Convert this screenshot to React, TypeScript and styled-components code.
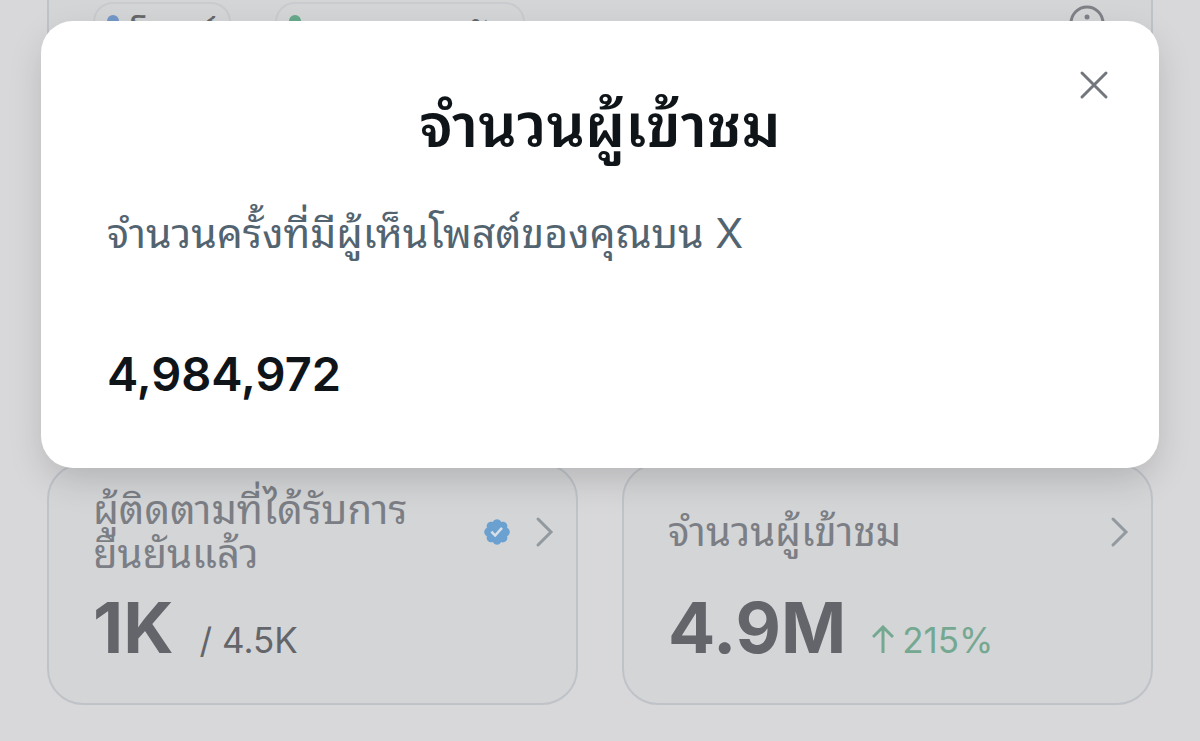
import React from "react";
import styled, { createGlobalStyle } from "styled-components";

const GlobalStyle = createGlobalStyle`
  * { box-sizing: border-box; }
  html, body { margin: 0; min-height: 100%; background: #d8d8da; }
  body { overflow: hidden; font-family: Inter, "Noto Sans Thai Looped", "Noto Sans Thai", sans-serif; }
  button { font: inherit; color: inherit; background: none; border: 0; padding: 0; }
  h1, h2, p { margin: 0; font-weight: 400; }
`;

const Page = styled.div`
  position: relative;
  padding: 0 47px 36px;
`;

const Panel = styled.section`
  display: flex;
  justify-content: space-between;
  align-items: flex-start;
  min-height: 419px;
  padding: 2px 46px 0 44px;
  background: #d4d5d7;
  border: solid #bfc3c8;
  border-width: 0 2px 2px;
  border-radius: 0 0 36px 36px;
`;

const Chips = styled.div`
  display: flex;
  gap: 44px;
`;

const Chip = styled.button`
  display: flex;
  align-items: center;
  gap: 12px;
  height: 70px;
  padding: 0 12px;
  border: 2px solid #c9cbce;
  border-radius: 20px;
  color: #66676a;
  font-size: 38px;
  line-height: 44px;
`;

const Dot = styled.span<{ $color: string }>`
  width: 12px;
  height: 12px;
  margin-bottom: 32px;
  border-radius: 50%;
  background: ${(p) => p.$color};
`;

const IconButton = styled.button`
  display: flex;
  color: #7e8186;
`;

const Cards = styled.div`
  display: grid;
  grid-template-columns: 1fr 1fr;
  gap: 44px;
  margin-top: 44px;
`;

const Card = styled.a`
  display: flex;
  flex-direction: column;
  gap: 16px;
  padding: 23px 22px 39px 44px;
  background: #d4d5d7;
  border: 2px solid #bfc3c8;
  border-radius: 36px;
  color: #63656a;
  text-decoration: none;
`;

const CardHead = styled.div`
  display: flex;
  align-items: center;
  justify-content: space-between;
  min-height: 88px;
`;

const CardTitle = styled.h2`
  max-width: 340px;
  color: #7b7e84;
  font-size: 40px;
  line-height: 44px;
`;

const CardIcons = styled.span`
  display: flex;
  align-items: center;
  gap: 22px;
  color: #92999f;
`;

const Figures = styled.div`
  display: flex;
  align-items: baseline;
  gap: 26px;
`;

const Value = styled.strong`
  font-size: 70px;
  line-height: 72px;
  font-weight: 700;
`;

const Note = styled.span<{ $positive?: boolean }>`
  display: flex;
  align-items: baseline;
  gap: 8px;
  color: ${(p) => (p.$positive ? "#75a890" : "#63656a")};
  font-size: 35px;
  line-height: 44px;
`;

const Dialog = styled.div`
  position: absolute;
  top: 21px;
  left: 41px;
  right: 41px;
  padding: 64px 66px;
  background: #fff;
  border-radius: 32px;
  box-shadow: 0 14px 36px -4px rgba(0, 0, 0, 0.17);
`;

const DialogTitle = styled.h1`
  color: #0f1419;
  font-size: 60px;
  line-height: 80px;
  font-weight: 600;
  text-align: center;
`;

const Description = styled.p`
  margin-top: 38px;
  color: #536471;
  font-size: 41px;
  line-height: 60px;
`;

const Total = styled.p`
  margin-top: 81px;
  color: #0f1419;
  font-size: 47px;
  line-height: 60px;
  font-weight: 600;
`;

const Close = styled.button`
  position: absolute;
  top: 48px;
  right: 49px;
  display: flex;
  color: #72767d;
`;

const Chevron = () => (
  <svg width="20" height="32" viewBox="0 0 20 32" fill="none" stroke="currentColor" strokeWidth="3" strokeLinecap="round" aria-hidden="true">
    <path d="M4 3l13 13L4 29" />
  </svg>
);

const ArrowUp = () => (
  <svg width="22" height="28" viewBox="0 0 22 28" fill="none" stroke="currentColor" strokeWidth="3" aria-hidden="true">
    <path d="M11 28V2M1 12L11 2l10 10" />
  </svg>
);

const Verified = () => (
  <svg width="30" height="30" viewBox="0 0 22 22" aria-label="ยืนยันแล้ว">
    <path
      fill="#6ba1d1"
      d="M20.396 11c-.018-.646-.215-1.275-.57-1.816-.354-.54-.852-.972-1.438-1.246.223-.607.27-1.264.14-1.897-.131-.634-.437-1.218-.882-1.687-.47-.445-1.053-.75-1.687-.882-.633-.13-1.29-.083-1.897.14-.273-.587-.704-1.086-1.245-1.44S11.647 1.62 11 1.604c-.646.017-1.273.213-1.813.568s-.969.854-1.24 1.44c-.608-.223-1.267-.272-1.902-.14-.635.13-1.22.436-1.69.882-.445.47-.749 1.055-.878 1.688-.13.633-.08 1.29.144 1.896-.587.274-1.087.705-1.443 1.245-.356.54-.555 1.17-.574 1.817.02.647.218 1.276.574 1.817.356.54.856.972 1.443 1.245-.224.606-.274 1.263-.144 1.896.13.634.433 1.218.877 1.688.47.443 1.054.747 1.687.878.633.132 1.29.084 1.897-.136.274.586.705 1.084 1.246 1.439.54.354 1.17.551 1.816.569.647-.016 1.276-.213 1.817-.567s.972-.854 1.245-1.44c.604.239 1.266.296 1.903.164.636-.132 1.22-.447 1.68-.907.46-.46.776-1.044.908-1.681s.075-1.299-.165-1.903c.586-.274 1.084-.705 1.439-1.246.354-.54.551-1.17.569-1.816z"
    />
    <path fill="#d8e0e8" d="M9.662 14.85l-3.429-3.428 1.293-1.302 2.072 2.072 4.4-4.794 1.347 1.246z" />
  </svg>
);

export default function App() {
  return (
    <>
      <GlobalStyle />
      <Page>
        <Panel>
          <Chips>
            <Chip><Dot $color="#7397c7" />โพสต์</Chip>
            <Chip><Dot $color="#66a98a" />การตอบกลับ</Chip>
          </Chips>
          <IconButton aria-label="ข้อมูล">
            <svg width="38" height="38" viewBox="0 0 38 38" fill="none" stroke="currentColor" strokeWidth="3">
              <circle cx="20" cy="21" r="16" />
              <path d="M20 21v9" />
              <circle cx="20" cy="15" r="2.5" fill="currentColor" stroke="none" />
            </svg>
          </IconButton>
        </Panel>
        <Cards>
          <Card href="#followers">
            <CardHead>
              <CardTitle>ผู้ติดตามที่ได้รับการยืนยันแล้ว</CardTitle>
              <CardIcons><Verified /><Chevron /></CardIcons>
            </CardHead>
            <Figures><Value>1K</Value><Note>/ 4.5K</Note></Figures>
          </Card>
          <Card href="#impressions">
            <CardHead>
              <CardTitle>จำนวนผู้เข้าชม</CardTitle>
              <CardIcons><Chevron /></CardIcons>
            </CardHead>
            <Figures><Value>4.9M</Value><Note $positive><ArrowUp />215%</Note></Figures>
          </Card>
        </Cards>
        <Dialog role="dialog" aria-modal="true" aria-labelledby="dialog-title">
          <Close aria-label="ปิด">
            <svg width="32" height="32" viewBox="0 0 32 32" fill="none" stroke="currentColor" strokeWidth="3" strokeLinecap="round">
              <path d="M4 4l24 24M28 4L4 28" />
            </svg>
          </Close>
          <DialogTitle id="dialog-title">จำนวนผู้เข้าชม</DialogTitle>
          <Description>จำนวนครั้งที่มีผู้เห็นโพสต์ของคุณบน X</Description>
          <Total>4,984,972</Total>
        </Dialog>
      </Page>
    </>
  );
}
